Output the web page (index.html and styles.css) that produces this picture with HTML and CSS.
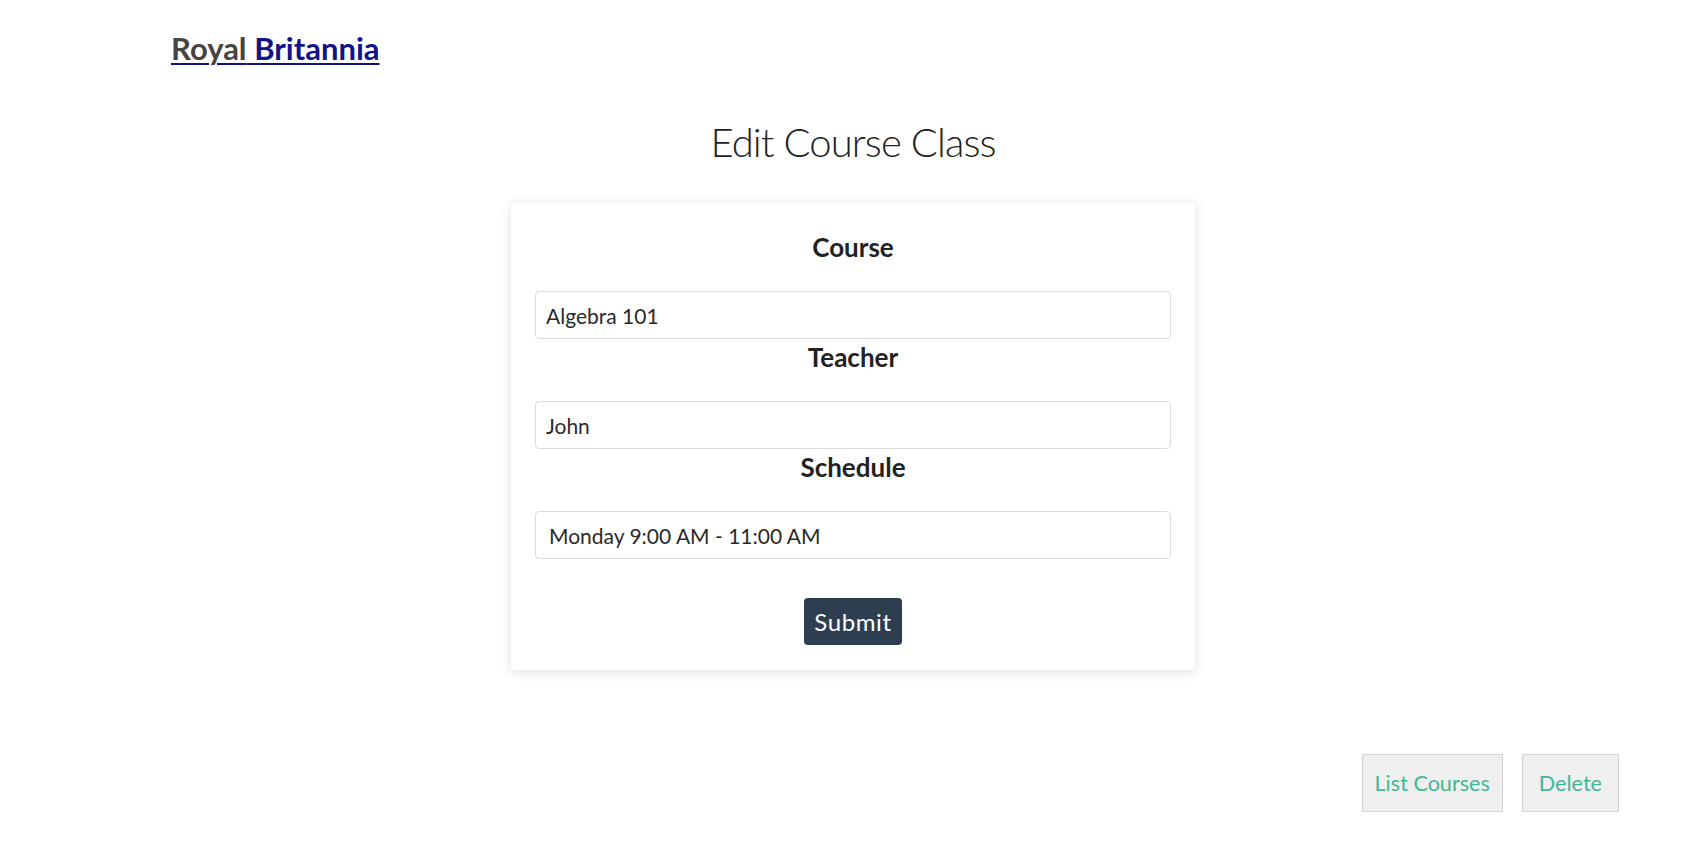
FILE: index.html
```html
<!DOCTYPE html>
<html lang="en">
<head>
<meta charset="utf-8">
<title>Edit Course Class</title>
<link rel="stylesheet" href="styles.css">
</head>
<body>
<header class="site-header">
  <a class="brand" href="#"><span class="brand-first">Royal</span> Britannia</a>
</header>
<main class="page">
  <h1 class="page-title">Edit Course Class</h1>
  <form class="card">
    <div class="field">
      <label class="field-label" for="course">Course</label>
      <input class="field-input" id="course" type="text" value="Algebra 101">
    </div>
    <div class="field">
      <label class="field-label" for="teacher">Teacher</label>
      <input class="field-input" id="teacher" type="text" value="John">
    </div>
    <div class="field">
      <label class="field-label" for="schedule">Schedule</label>
      <input class="field-input field-input-wide" id="schedule" type="text" value="Monday 9:00 AM - 11:00 AM">
    </div>
    <div class="actions">
      <button class="submit-btn" type="button">Submit</button>
    </div>
  </form>
</main>
<nav class="footer-actions">
  <button class="ghost-btn" type="button">List Courses</button>
  <button class="ghost-btn ghost-btn-narrow" type="button">Delete</button>
</nav>
</body>
</html>
```
FILE: styles.css
```css
html, body {
  margin: 0;
  padding: 0;
  background: #ffffff;
}
body {
  font-family: Lato, "Open Sans", sans-serif;
  color: #222;
}
.site-header {
  padding: 30px 0 0 171px;
  height: 38px;
}
.brand {
  font-family: Lato, sans-serif;
  font-weight: 700;
  font-size: 31px;
  line-height: 37px;
  color: #131388;
  text-decoration: underline;
  text-decoration-thickness: 2px;
  text-underline-offset: 3px;
}
.brand-first {
  color: #444;
}
.page {
  display: flex;
  flex-direction: column;
  align-items: center;
  padding-left: 6px;
}
.page-title {
  margin: 49px 0 36px;
  font-family: Lato, sans-serif;
  font-weight: 300;
  font-size: 40px;
  line-height: 50px;
  color: #222;
  letter-spacing: -0.9px;
}
.card {
  width: 636px;
  padding: 24px 24px 25px;
  background: #fff;
  border-radius: 4px;
  box-shadow: 0 2px 12px rgba(0, 0, 0, 0.13);
  display: flex;
  flex-direction: column;
}
.field {
  display: flex;
  flex-direction: column;
  margin-bottom: 3px;
}
.field-label {
  display: block;
  text-align: center;
  font-weight: 700;
  font-size: 26px;
  line-height: 30px;
  margin-bottom: 29px;
  color: #222;
}
.field:first-child .field-label {
  margin-top: 5px;
  margin-bottom: 29px;
}
.field-input {
  box-sizing: border-box;
  width: 100%;
  height: 48px;
  padding: 0 10px;
  border: 1px solid #dcdcdc;
  border-radius: 4px;
  font-family: Lato, sans-serif;
  font-size: 21px;
  color: #2a2a2a;
  background: #fff;
}
.field-input-wide {
  padding-left: 13px;
}
.actions {
  display: flex;
  justify-content: center;
  margin-top: 36px;
}
.submit-btn {
  height: 47px;
  padding: 0 10px;
  border: none;
  border-radius: 4px;
  background: #2c3e50;
  color: #fff;
  font-family: Lato, sans-serif;
  font-size: 24px;
  letter-spacing: 0.6px;
}
.footer-actions {
  display: flex;
  justify-content: flex-end;
  gap: 19px;
  padding: 84px 81px 0 0;
}
.ghost-btn {
  height: 58px;
  padding: 0 12px;
  border: 1px solid #d3d3d3;
  background: #efefef;
  color: #3fb897;
  font-family: Lato, sans-serif;
  font-size: 21.6px;
}
.ghost-btn-narrow {
  padding: 0 16px;
}
```
